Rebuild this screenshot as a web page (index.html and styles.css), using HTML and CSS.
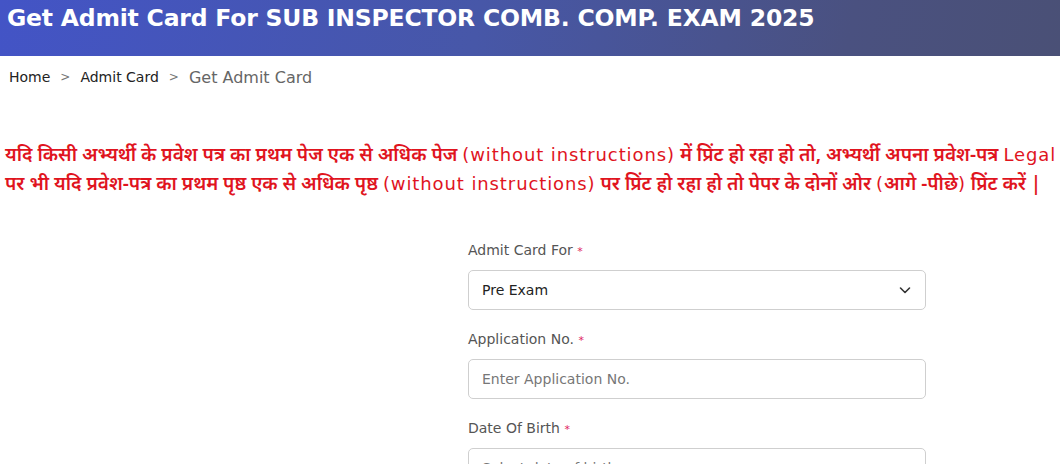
FILE: index.html
```html
<!DOCTYPE html>
<html lang="hi">
<head>
<meta charset="utf-8">
<title>Get Admit Card</title>
<link rel="stylesheet" href="styles.css">
</head>
<body>
<header class="banner">
  <h1 class="banner-title">Get Admit Card For SUB INSPECTOR COMB. COMP. EXAM 2025</h1>
</header>
<nav class="crumbs">
  <a class="crumb" href="#">Home</a>
  <span class="sep">&gt;</span>
  <a class="crumb" href="#">Admit Card</a>
  <span class="sep">&gt;</span>
  <span class="crumb-current">Get Admit Card</span>
</nav>
<div class="notice-wrap">
<p class="notice">यदि किसी अभ्यर्थी के प्रवेश पत्र का प्रथम पेज एक से अधिक पेज <span class="latin">(without instructions)</span> में प्रिंट हो रहा हो तो, अभ्यर्थी अपना प्रवेश-पत्र <span class="latin">Legal size</span> पेपर पर प्रिंट करें।<br>पर भी यदि प्रवेश-पत्र का प्रथम पृष्ठ एक से अधिक पृष्ठ <span class="latin">(without instructions)</span> पर प्रिंट हो रहा हो तो पेपर के दोनों ओर <span class="latin">(</span>आगे -पीछे<span class="latin">)</span> प्रिंट करें |</p>
</div>
<form class="form">
  <div class="field">
    <label class="label">Admit Card For <span class="req">*</span></label>
    <div class="select">
      <span class="select-value">Pre Exam</span>
      <svg class="chev" width="14" height="14" viewBox="0 0 14 14"><path d="M2.5 5 L7 9.5 L11.5 5" fill="none" stroke="#333" stroke-width="1.6" stroke-linecap="round" stroke-linejoin="round"/></svg>
    </div>
  </div>
  <div class="field">
    <label class="label">Application No. <span class="req">*</span></label>
    <input class="input" type="text" placeholder="Enter Application No.">
  </div>
  <div class="field">
    <label class="label">Date Of Birth <span class="req">*</span></label>
    <input class="input" type="text" placeholder="Select date of birth">
  </div>
</form>
</body>
</html>
```
FILE: styles.css
```css
html, body {
  margin: 0;
  padding: 0;
  background: #fff;
  overflow: hidden;
}
body {
  font-family: "DejaVu Sans", "Noto Sans", sans-serif;
  width: 1060px;
  height: 464px;
}
.banner {
  height: 56px;
  background: linear-gradient(100deg, #4354c6 0%, #4757a8 45%, #4a5180 80%, #4a5076 100%);
  padding: 0 0 0 7px;
  box-sizing: border-box;
}
.banner-title {
  margin: 0;
  padding-top: 4px;
  color: #fff;
  font-family: "DejaVu Sans", sans-serif;
  font-weight: bold;
  font-size: 23.5px;
  line-height: 28px;
  white-space: nowrap;
  letter-spacing: -0.2px;
}
.crumbs {
  display: flex;
  align-items: center;
  gap: 10px;
  padding: 10px 0 0 9px;
  height: 22px;
  font-family: "DejaVu Sans", sans-serif;
}
.crumb {
  color: #222;
  text-decoration: none;
  font-size: 14px;
}
.sep {
  color: #777;
  font-size: 12px;
}
.crumb-current {
  color: #666;
  font-size: 16px;
}
.notice-wrap {
  overflow: hidden;
  width: 1060px;
  height: 110px;
}
.notice {
  margin: 52px 0 0 5px;
  color: #e0141e;
  font-size: 19px;
  line-height: 29px;
  white-space: nowrap;
  font-family: "Noto Sans", "DejaVu Sans", sans-serif;
  font-weight: 600;
}
.notice .latin {
  font-weight: normal;
  font-family: "DejaVu Sans", sans-serif;
  font-size: 18px;
  letter-spacing: 0.9px;
}
.form {
  margin: 43px 0 0 468px;
  width: 458px;
  display: flex;
  flex-direction: column;
  gap: 20px;
}
.field {
  display: flex;
  flex-direction: column;
  gap: 9px;
}
.label {
  color: #555;
  font-size: 14px;
  line-height: 18px;
}
.req {
  color: #e0245e;
  font-size: 11px;
}
.select, .input {
  box-sizing: border-box;
  height: 40px;
  border: 1px solid #cfcfcf;
  border-radius: 5px;
  background: #fff;
  padding: 0 13px;
  font-family: "DejaVu Sans", sans-serif;
  font-size: 14px;
}
.select {
  display: flex;
  align-items: center;
  justify-content: space-between;
  color: #222;
}
.input {
  width: 100%;
  color: #222;
  outline: none;
}
.input::placeholder {
  color: #777;
}
```
